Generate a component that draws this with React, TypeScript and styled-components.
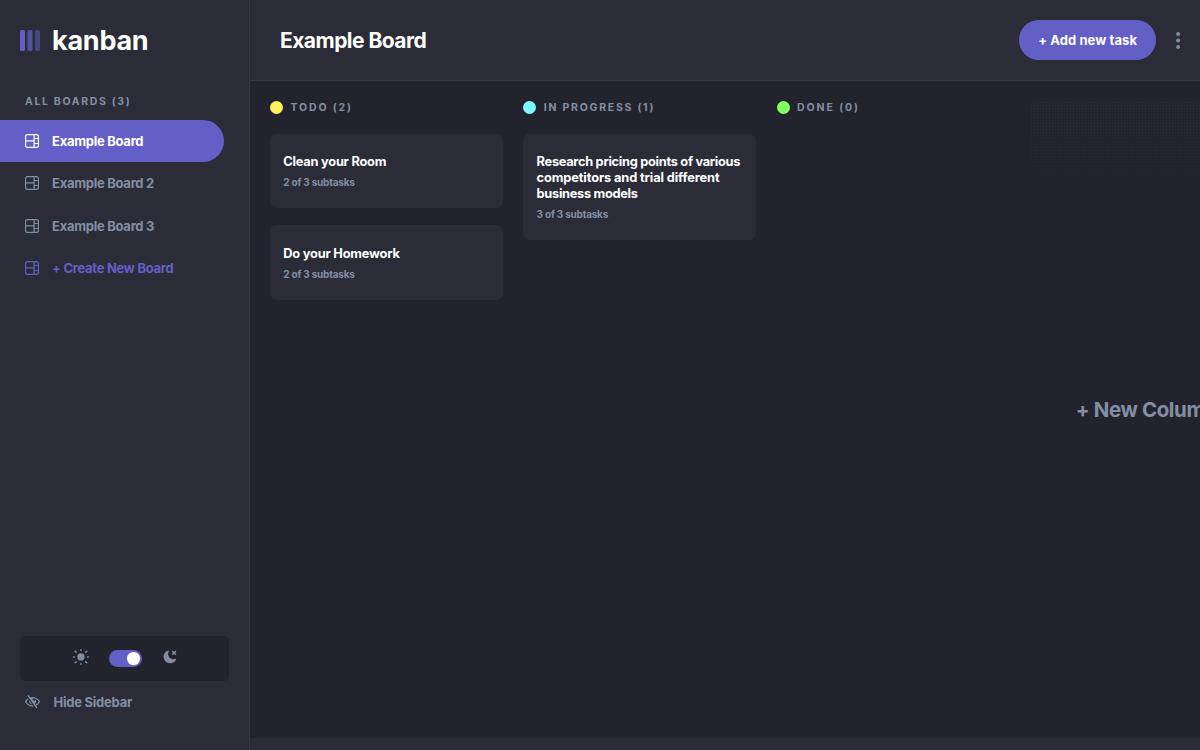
import React from "react";
import styled, { createGlobalStyle } from "styled-components";

const Global = createGlobalStyle`
  * { box-sizing: border-box; }
  body { margin: 0; background: #22232d; overflow: hidden; font-family: "Inter", sans-serif; font-weight: 700; }
  button { font: inherit; border: 0; padding: 0; background: none; cursor: pointer; }
  h1, h2, h3, p { margin: 0; font-weight: inherit; }
  svg { flex: none; overflow: visible; }
`;

const Page = styled.div`
  display: flex;
  width: 1200px;
  height: 750px;
  overflow: hidden;
  color: #fff;
`;

const Sidebar = styled.aside`
  display: flex;
  flex-direction: column;
  flex: none;
  width: 250px;
  height: 750px;
  background: #2b2c37;
  border-right: 1px solid #373843;
`;

const Brand = styled.div`
  display: flex;
  align-items: center;
  gap: 12px;
  height: 81px;
  padding-left: 20px;
`;

const BrandName = styled.span`
  font-size: 27px;
  line-height: 30px;
  letter-spacing: -0.25px;
`;

const BoardsLabel = styled.h2`
  padding: 13.5px 0 0 25px;
  height: 38.7px;
  font-size: 10.5px;
  line-height: 14px;
  letter-spacing: 1.65px;
  color: #828fa3;
`;

const BoardList = styled.nav`
  display: flex;
  flex-direction: column;
`;

const BoardItem = styled.button<{ $tone?: "active" | "create" }>`
  display: flex;
  align-items: center;
  gap: 12.8px;
  width: 224px;
  height: 42.5px;
  padding-left: 25.3px;
  font-size: 13px;
  letter-spacing: -0.28px;
  white-space: nowrap;
  border-radius: 0 22px 22px 0;
  background: ${(p) => (p.$tone === "active" ? "#635fc7" : "transparent")};
  color: ${(p) => (p.$tone === "active" ? "#fff" : p.$tone === "create" ? "#635fc7" : "#828fa3")};
`;

const ThemePanel = styled.div`
  display: flex;
  align-items: center;
  justify-content: center;
  gap: 20.3px;
  width: 209px;
  height: 45.5px;
  margin: auto 0 0 20px;
  border-radius: 5px;
  background: #22232d;
`;

const ThemeIcon = styled.svg`
  display: block;
  margin-bottom: 2px;
`;

const Switch = styled.button`
  display: flex;
  align-items: center;
  justify-content: flex-end;
  width: 33.5px;
  height: 17px;
  padding-right: 2.5px;
  border-radius: 9px;
  background: #635fc7;
`;

const Knob = styled.span`
  width: 12.6px;
  height: 12.6px;
  border-radius: 50%;
  background: #fff;
`;

const HideButton = styled.button`
  display: flex;
  align-items: center;
  gap: 13.2px;
  height: 42px;
  margin-bottom: 27px;
  padding-left: 25.3px;
  font-size: 13px;
  letter-spacing: -0.24px;
  color: #828fa3;
`;

const Main = styled.main`
  display: flex;
  flex-direction: column;
  width: 950px;
`;

const Header = styled.header`
  display: flex;
  align-items: center;
  flex: none;
  height: 81px;
  padding: 0 20px 0 30px;
  background: #2b2c37;
  border-bottom: 1px solid #373843;
`;

const Title = styled.h1`
  flex: 1;
  font-size: 21px;
  letter-spacing: -0.53px;
`;

const AddButton = styled.button`
  width: 137px;
  height: 40px;
  border-radius: 20px;
  background: #635fc7;
  color: #fff;
  font-size: 13px;
  letter-spacing: 0.08px;
`;

const MenuButton = styled.button`
  display: flex;
  margin-left: 19.5px;
  color: #828fa3;
`;

const Board = styled.section`
  display: flex;
  gap: 20.3px;
  height: 657px;
  padding: 20px;
  overflow: hidden;
  background: #22232d;
`;

const Column = styled.div`
  flex: none;
  width: 233px;
`;

const ColumnHead = styled.h2<{ $track: number }>`
  display: flex;
  align-items: center;
  gap: 7.5px;
  height: 13px;
  margin-bottom: 19.6px;
  font-size: 10.5px;
  letter-spacing: ${(p) => p.$track}px;
  color: #828fa3;
  white-space: nowrap;
`;

const Dot = styled.span<{ $color: string }>`
  width: 13px;
  height: 13px;
  border-radius: 50%;
  background: ${(p) => p.$color};
`;

const Card = styled.article`
  margin-bottom: 17px;
  padding: 20.6px 0 17px 13.3px;
  border-radius: 6.5px;
  background: #2b2c37;
`;

const CardTitle = styled.h3`
  font-size: 12.8px;
  line-height: 16px;
`;

const TitleLine = styled.span<{ $track: number }>`
  display: block;
  letter-spacing: ${(p) => p.$track}px;
  white-space: nowrap;
`;

const CardMeta = styled.p`
  margin-top: 6px;
  font-size: 10px;
  line-height: 13px;
  height: 15px;
  letter-spacing: -0.22px;
  color: #828fa3;
`;

const NewColumn = styled.button`
  flex: none;
  width: 233px;
  border-radius: 6px;
  background:
    linear-gradient(rgba(34, 35, 45, 0), #22232d 115px),
    radial-gradient(circle at center, #2b2c37 0.5px, rgba(43, 44, 55, 0) 1.2px) 0 0 / 3px 3px;
  color: #828fa3;
  font-size: 20.5px;
  letter-spacing: -0.4px;
  white-space: nowrap;
`;

const Scrollbar = styled.div`
  height: 12px;
  background: #2b2c37;
`;

const BoardIcon = () => (
  <svg width="14" height="14" viewBox="0 0 16 16" fill="currentColor">
    <path d="M0 2.889A2.889 2.889 0 0 1 2.889 0H13.11A2.889 2.889 0 0 1 16 2.889V13.11A2.888 2.888 0 0 1 13.111 16H2.89A2.889 2.889 0 0 1 0 13.111V2.89Zm1.333 5.555v4.667c0 .859.697 1.556 1.556 1.556h6.889V8.444H1.333Zm8.445-1.333V1.333h-6.89A1.556 1.556 0 0 0 1.334 2.89V7.11h8.445Zm4.889-1.333H11.11v4.444h3.556V5.778Zm0 5.778H11.11v3.11h2a1.556 1.556 0 0 0 1.556-1.555v-1.555Zm0-7.112V2.89a1.555 1.555 0 0 0-1.556-1.556h-2v3.111h3.556Z" />
  </svg>
);

const BrandMark = () => (
  <svg width="20" height="21" viewBox="0 0 20 21" fill="#635fc7">
    <rect width="5" height="21" rx="1.6" />
    <rect x="7.5" width="5" height="21" rx="1.6" opacity="0.75" />
    <rect x="15" width="5" height="21" rx="1.6" opacity="0.5" />
  </svg>
);

type Line = { text: string; track: number };
type Task = { lines: Line[]; meta: string };

const columns: { name: string; color: string; track: number; tasks: Task[] }[] = [
  {
    name: "TODO (2)", color: "#fff15c", track: 1.85,
    tasks: [
      { lines: [{ text: "Clean your Room", track: -0.23 }], meta: "2 of 3 subtasks" },
      { lines: [{ text: "Do your Homework", track: -0.2 }], meta: "2 of 3 subtasks" },
    ],
  },
  {
    name: "IN PROGRESS (1)", color: "#7dfaff", track: 1.75,
    tasks: [
      {
        lines: [
          { text: "Research pricing points of various", track: -0.29 },
          { text: "competitors and trial different", track: -0.11 },
          { text: "business models", track: -0.3 },
        ],
        meta: "3 of 3 subtasks",
      },
    ],
  },
  { name: "DONE (0)", color: "#82ff5f", track: 1.9, tasks: [] },
];

export default function App() {
  return (
    <Page>
      <Global />
      <Sidebar>
        <Brand>
          <BrandMark />
          <BrandName>kanban</BrandName>
        </Brand>
        <BoardsLabel>ALL BOARDS (3)</BoardsLabel>
        <BoardList>
          <BoardItem $tone="active"><BoardIcon />Example Board</BoardItem>
          <BoardItem><BoardIcon />Example Board 2</BoardItem>
          <BoardItem><BoardIcon />Example Board 3</BoardItem>
          <BoardItem $tone="create"><BoardIcon />+ Create New Board</BoardItem>
        </BoardList>
        <ThemePanel>
          <ThemeIcon width="16" height="16" viewBox="0 0 18.4 18.4" fill="#828fa3">
            <path d="M9.167 15.833a.833.833 0 0 1 .833.834v.833a.833.833 0 0 1-1.667 0v-.833a.833.833 0 0 1 .834-.834ZM3.75 13.75a.833.833 0 0 1 .59 1.422l-1.25 1.25a.833.833 0 0 1-1.18-1.178l1.25-1.25a.833.833 0 0 1 .59-.244Zm10.833 0c.221 0 .433.088.59.244l1.25 1.25a.833.833 0 0 1-1.179 1.178l-1.25-1.25a.833.833 0 0 1 .59-1.422ZM9.167 5a4.167 4.167 0 1 1 0 8.334 4.167 4.167 0 0 1 0-8.334Zm-7.5 3.333a.833.833 0 0 1 0 1.667H.833a.833.833 0 1 1 0-1.667h.834Zm15.833 0a.833.833 0 0 1 0 1.667h-.833a.833.833 0 0 1 0-1.667h.833Zm-1.667-6.666a.833.833 0 0 1 .59 1.422l-1.25 1.25a.833.833 0 1 1-1.179-1.178l1.25-1.25a.833.833 0 0 1 .59-.244Zm-13.333 0c.221 0 .433.088.59.244l1.25 1.25a.833.833 0 0 1-1.18 1.178L1.91 3.09a.833.833 0 0 1 .59-1.422ZM9.167 0A.833.833 0 0 1 10 .833v.834a.833.833 0 1 1-1.667 0V.833A.833.833 0 0 1 9.167 0Z" />
          </ThemeIcon>
          <Switch aria-label="Toggle theme"><Knob /></Switch>
          <ThemeIcon width="13.6" height="13.6" viewBox="0 0 16 16" fill="#828fa3">
            <path d="M6.474.682c.434-.11.718.406.481.78A6.067 6.067 0 0 0 6.01 4.72c0 3.418 2.827 6.187 6.314 6.187.89.002 1.77-.182 2.584-.54.408-.18.894.165.724.57-1.16 2.775-3.944 4.73-7.194 4.73-4.292 0-7.771-3.41-7.771-7.615 0-3.541 2.466-6.518 5.807-7.37Zm8.433.07c.442-.294.969.232.674.674l-.525.787a1.943 1.943 0 0 0 0 2.157l.525.788c.295.441-.232.968-.674.673l-.787-.525a1.943 1.943 0 0 0-2.157 0l-.786.525c-.442.295-.97-.232-.675-.673l.525-.788a1.943 1.943 0 0 0 0-2.157l-.525-.787c-.295-.442.232-.968.674-.673l.787.525a1.943 1.943 0 0 0 2.157 0l.787-.526Z" />
          </ThemeIcon>
        </ThemePanel>
        <HideButton>
          <svg width="15" height="13.4" viewBox="0 0 18 16" fill="currentColor">
            <path d="M8.522 11.223a4.252 4.252 0 0 1-3.654-5.22l3.654 5.22ZM9 12.25A8.685 8.685 0 0 1 1.5 8a8.612 8.612 0 0 1 2.76-2.864l-.86-1.23A10.112 10.112 0 0 0 .208 7.238a1.5 1.5 0 0 0 0 1.524A10.187 10.187 0 0 0 9 13.75c.414 0 .828-.025 1.239-.074l-1-1.43A8.88 8.88 0 0 1 9 12.25Zm8.792-3.488a10.14 10.14 0 0 1-4.486 4.046l1.504 2.148a.375.375 0 0 1-.092.523l-.648.453a.375.375 0 0 1-.523-.092L3.19 1.044A.375.375 0 0 1 3.282.52L3.93.068a.375.375 0 0 1 .523.092l1.735 2.479A10.308 10.308 0 0 1 9 2.25c3.746 0 7.031 2 8.792 4.988a1.5 1.5 0 0 1 0 1.524ZM16.5 8a8.674 8.674 0 0 0-6.755-4.219A1.75 1.75 0 1 0 12.75 5v-.001a4.25 4.25 0 0 1-1.154 5.366l.834 1.192A8.641 8.641 0 0 0 16.5 8Z" />
          </svg>
          Hide Sidebar
        </HideButton>
      </Sidebar>
      <Main>
        <Header>
          <Title>Example Board</Title>
          <AddButton>+ Add new task</AddButton>
          <MenuButton aria-label="Board menu">
            <svg width="4.4" height="17" viewBox="0 0 4.4 17" fill="currentColor">
              <circle cx="2.1" cy="2.1" r="2" />
              <circle cx="2.1" cy="8.5" r="2" />
              <circle cx="2.1" cy="14.9" r="2" />
            </svg>
          </MenuButton>
        </Header>
        <Board>
          {columns.map((c) => (
            <Column key={c.name}>
              <ColumnHead $track={c.track}><Dot $color={c.color} />{c.name}</ColumnHead>
              {c.tasks.map((t) => (
                <Card key={t.lines[0].text}>
                  <CardTitle>
                    {t.lines.map((l) => (
                      <TitleLine key={l.text} $track={l.track}>{l.text}</TitleLine>
                    ))}
                  </CardTitle>
                  <CardMeta>{t.meta}</CardMeta>
                </Card>
              ))}
            </Column>
          ))}
          <NewColumn>+ New Column</NewColumn>
        </Board>
        <Scrollbar />
      </Main>
    </Page>
  );
}
